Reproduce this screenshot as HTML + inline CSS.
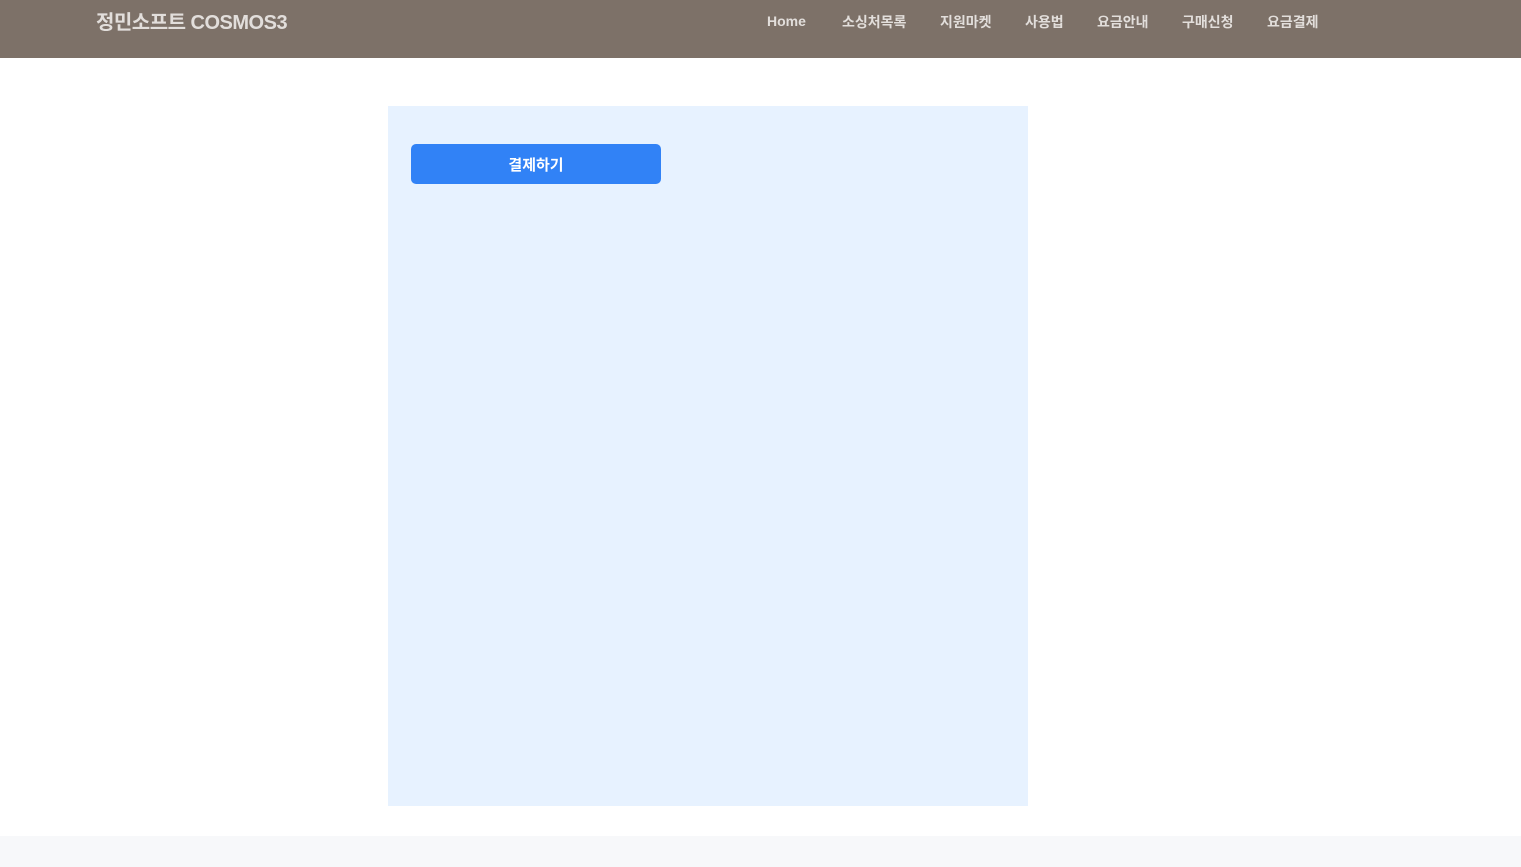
<!DOCTYPE html>
<html><head><meta charset="utf-8"><style>
body{margin:0;width:1521px;height:867px;background:#fff;font-family:"Liberation Sans","Noto Sans CJK KR",sans-serif;position:relative;overflow:hidden}
.hdr{position:absolute;left:0;top:0;width:1521px;height:58px;background:#7d7168}
.logo{position:absolute;left:96px;top:6px;font-size:20px;font-weight:bold;color:#e2dedb;letter-spacing:-0.5px}
.nav a{position:absolute;top:12px;font-size:14px;font-weight:bold;color:#e2dedb;text-decoration:none}
.panel{position:absolute;left:388px;top:106px;width:640px;height:700px;background:#e7f2ff}
.btn{position:absolute;left:411px;top:144px;width:250px;height:40px;background:#3182f6;border-radius:5px;color:#fff;font-size:15px;font-weight:bold;text-align:center;line-height:43px}
.foot{position:absolute;left:0;top:836px;width:1521px;height:31px;background:#f7f8fa}
</style></head><body>
<div class="hdr"><div class="logo">정민소프트 COSMOS3</div>
<div class="nav">
<a style="left:767px;top:13px">Home</a>
<a style="left:842px">소싱처목록</a>
<a style="left:940px">지원마켓</a>
<a style="left:1025px">사용법</a>
<a style="left:1097px">요금안내</a>
<a style="left:1182px">구매신청</a>
<a style="left:1267px">요금결제</a>
</div></div>
<div class="panel"></div>
<div class="btn">결제하기</div>
<div class="foot"></div>
</body></html>
